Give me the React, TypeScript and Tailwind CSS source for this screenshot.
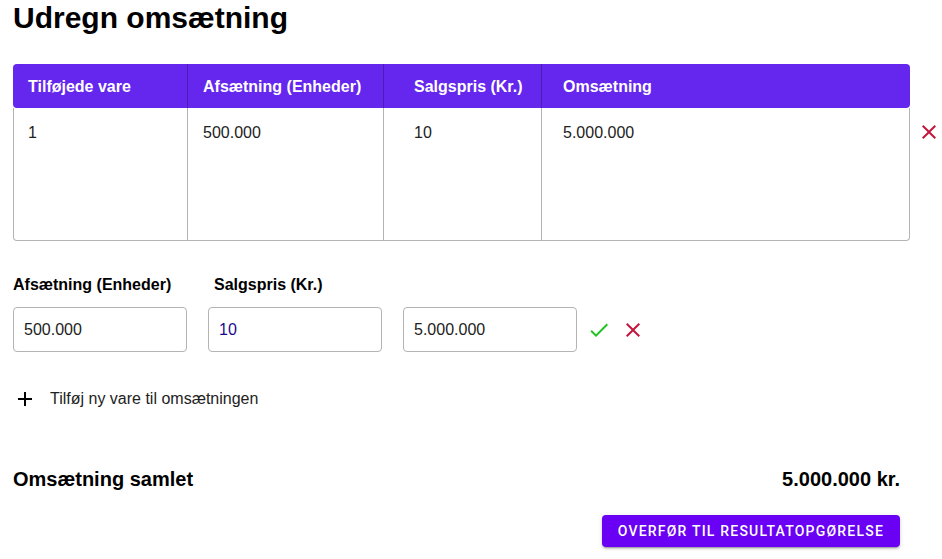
import React from 'react';

const CheckIcon = ({ className }: { className?: string }) => (
    <svg viewBox="0 0 24 24" className={className} fill="currentColor">
        <path d="M9 16.17 4.83 12l-1.42 1.41L9 19 21 7l-1.41-1.41z" />
    </svg>
);

const CloseIcon = ({ className }: { className?: string }) => (
    <svg viewBox="0 0 24 24" className={className} fill="currentColor">
        <path d="M19 6.41 17.59 5 12 10.59 6.41 5 5 6.41 10.59 12 5 17.59 6.41 19 12 13.41 17.59 19 19 17.59 13.41 12z" />
    </svg>
);

const AddIcon = ({ className }: { className?: string }) => (
    <svg viewBox="0 0 24 24" className={className} fill="currentColor">
        <path d="M19 13h-6v6h-2v-6H5v-2h6V5h2v6h6v2z" />
    </svg>
);

const columns = [
    { title: 'Tilføjede vare', width: 'w-[174px]', pad: 'pl-[15px]' },
    { title: 'Afsætning (Enheder)', width: 'w-[196px]', pad: 'pl-[15px]' },
    { title: 'Salgspris (Kr.)', width: 'w-[158px]', pad: 'pl-[30px]' },
    { title: 'Omsætning', width: 'flex-1', pad: 'pl-[21px]' },
];

const rows = [['1', '500.000', '10', '5.000.000']];

const App: React.FC = () => {
    return (
        <div className="min-h-screen bg-white px-[13px] pt-[3px] font-['Liberation_Sans',Arial,sans-serif] text-[#222]">
            <h1 className="text-[30px] leading-[30px] font-bold text-black">Udregn omsætning</h1>

            {/* Table with delete icon */}
            <div className="mt-[31px] flex items-start">
                <div className="w-[897px] shrink-0">
                    <div className="flex h-[44px] rounded-[4px] bg-[#6526ee] text-white">
                        {columns.map((c, i) => (
                            <div
                                key={c.title}
                                className={`${c.width} ${c.pad} flex items-center pt-[2px] text-[16px] font-bold ${i > 0 ? 'border-l border-[#4a1fb0]' : ''}`}
                            >
                                {c.title}
                            </div>
                        ))}
                    </div>
                    {rows.map((r, ri) => (
                        <div key={ri} className="flex h-[133px] rounded-b-[4px] border border-t-0 border-[#b4b4b4]">
                            {r.map((v, i) => (
                                <div
                                    key={i}
                                    className={`${i === 0 ? 'w-[173px] pl-[14px]' : columns[i].width} ${i > 0 ? columns[i].pad : ''} pt-[16px] text-[16px] leading-[18px] ${i > 0 ? 'border-l border-[#b4b4b4]' : ''}`}
                                >
                                    {v}
                                </div>
                            ))}
                        </div>
                    ))}
                </div>
                <button className="ml-[7px] mt-[56px] text-[#c4163c]">
                    <CloseIcon className="h-6 w-6" />
                </button>
            </div>

            {/* Edit row */}
            <div className="mt-[35px] flex text-[16px] leading-[18px] font-bold text-black">
                <span className="w-[201px]">Afsætning (Enheder)</span>
                <span>Salgspris (Kr.)</span>
            </div>
            <div className="mt-[13px] flex items-center gap-[21px]">
                <div className="flex h-[45px] w-[174px] items-center rounded-[4px] border border-[#b4b4b4] px-[10px] text-[16px]">500.000</div>
                <div className="flex h-[45px] w-[174px] items-center rounded-[4px] border border-[#b4b4b4] px-[10px] text-[16px] text-[#1a0a8c]">10</div>
                <div className="flex h-[45px] w-[174px] items-center rounded-[4px] border border-[#b4b4b4] px-[10px] text-[16px]">5.000.000</div>
                <div className="-ml-[11px] flex items-center gap-[10px]">
                    <CheckIcon className="h-6 w-6 text-[#22c322]" />
                    <CloseIcon className="h-6 w-6 text-[#c4163c]" />
                </div>
            </div>

            {/* Add row */}
            <div className="mt-[35px] flex items-center gap-[13px] text-[16px] text-[#222]">
                <AddIcon className="h-6 w-6 text-black" />
                <span>Tilføj ny vare til omsætningen</span>
            </div>

            {/* Total */}
            <div className="w-[887px]">
                <div className="mt-[57px] flex items-center justify-between text-[20px] leading-[23px] font-bold text-black">
                    <span>Omsætning samlet</span>
                    <span>5.000.000 kr.</span>
                </div>
                <div className="mt-[24px] flex justify-end">
                    <button className="h-[32px] rounded-[4px] bg-[#6a00f4] px-4 font-['Roboto',sans-serif] text-[14px] font-medium tracking-[1.2px] text-white uppercase shadow-[0_3px_1px_-2px_rgba(0,0,0,0.2),0_2px_2px_0_rgba(0,0,0,0.14),0_1px_5px_0_rgba(0,0,0,0.12)]">
                        Overfør til resultatopgørelse
                    </button>
                </div>
            </div>
        </div>
    );
};

export default App;
